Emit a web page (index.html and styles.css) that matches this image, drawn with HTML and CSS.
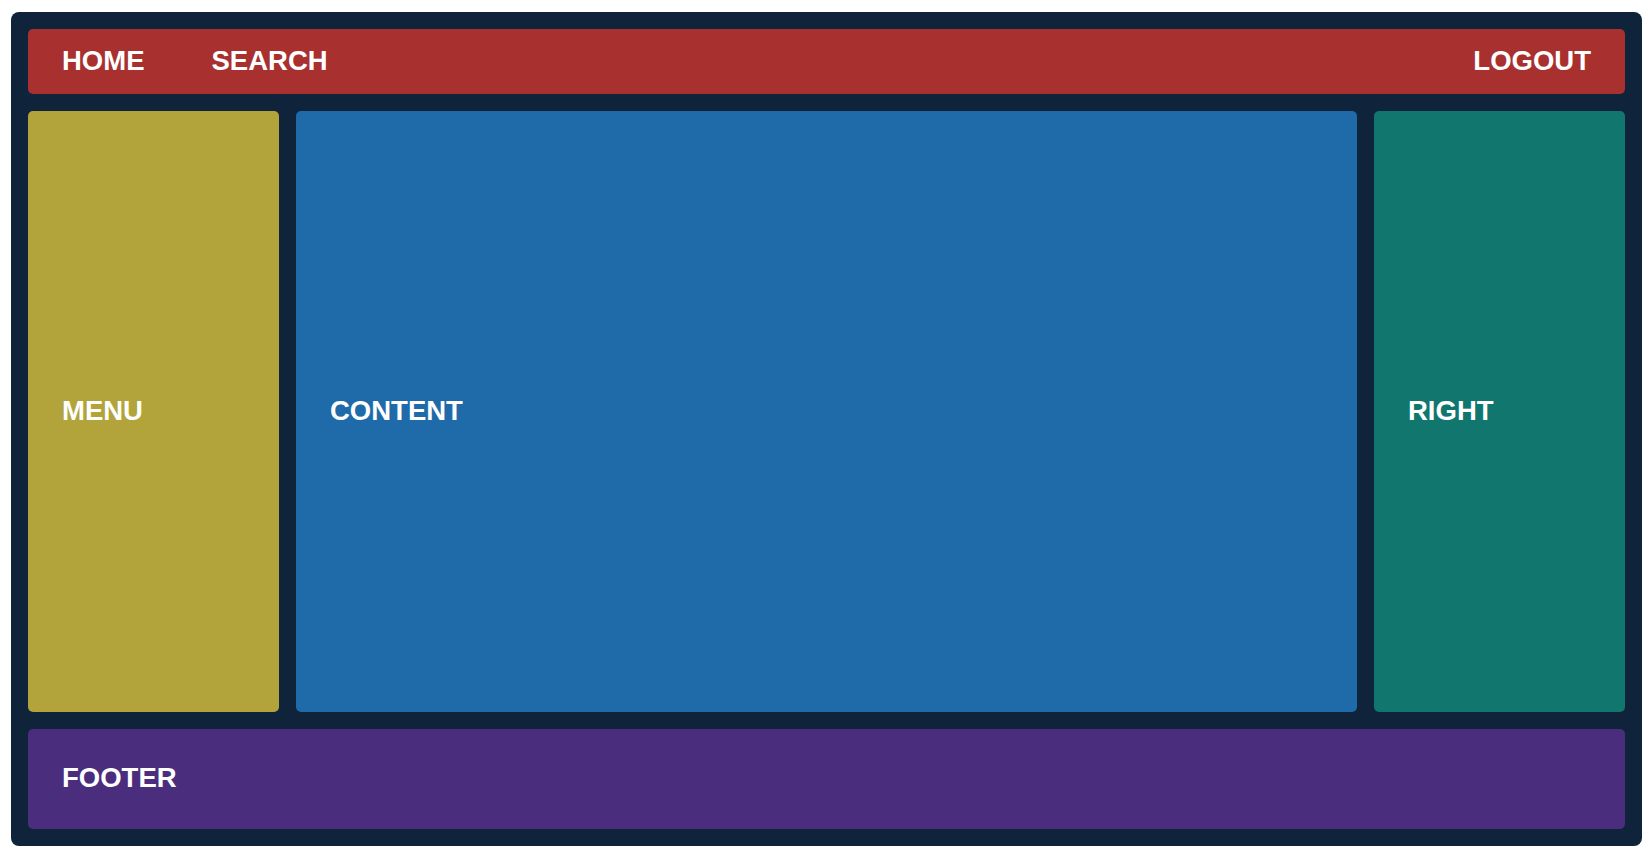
FILE: index.html
```html
<!DOCTYPE html>
<html lang="en">
<head>
    <meta charset="UTF-8">
    <meta name="viewport" content="width=device-width, initial-scale=1.0">
    <title>Layout</title>
    <link rel="stylesheet" href="styles.css">
</head>
<body>
    <div class="wrapper">
        <!-- Top navigation -->
        <header class="header">
            <nav class="nav">
                <span class="nav-item">HOME</span>
                <span class="nav-item">SEARCH</span>
            </nav>
            <span class="nav-item logout">LOGOUT</span>
        </header>

        <div class="main">
            <aside class="box menu">MENU</aside>
            <section class="box content">CONTENT</section>
            <aside class="box right">RIGHT</aside>
        </div>

        <footer class="box footer">FOOTER</footer>
    </div>
</body>
</html>
```

FILE: styles.css
```css
body {
    font-family: "Liberation Sans", Arial, sans-serif;
    margin: 0;
    padding: 12px 8px 0 11px;
    background-color: #ffffff;
}

.wrapper {
    background-color: #0f233b;
    border-radius: 8px;
    padding: 17px;
    height: 800px;
    display: grid;
    grid-template-rows: 65px 1fr 100px;
    gap: 17px;
}

.box,
.header {
    border-radius: 5px;
    color: white;
    font-size: 27.5px;
    font-weight: bold;
    padding: 0 34px 2px;
    display: flex;
    align-items: center;
}

.header {
    background-color: #a8302e;
    justify-content: space-between;
}

.nav {
    display: flex;
    gap: 67px;
}

.main {
    display: grid;
    grid-template-columns: 251px 1fr 251px;
    gap: 17px;
}

.menu {
    background-color: #b2a43a;
}

.content {
    background-color: #1f6aa8;
}

.right {
    background-color: #10766e;
}

.footer {
    background-color: #4a2d7c;
}
```
